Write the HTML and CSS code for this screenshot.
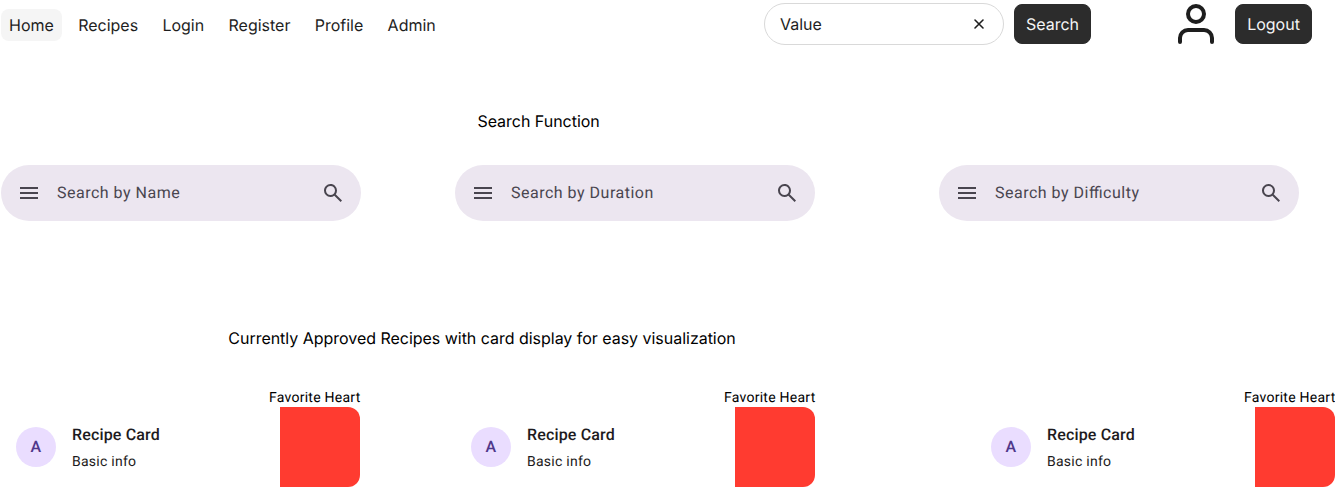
FILE: index.html
```html
<!DOCTYPE html>
<html lang="en">
<head>
<meta charset="utf-8">
<title>Recipes</title>
<link rel="stylesheet" href="styles.css">
</head>
<body>
<svg class="defs" width="0" height="0">
<symbol id="menu" viewBox="0 0 24 24"><path d="M3 18v-2h18v2zm0-5v-2h18v2zm0-5V6h18v2z"/></symbol>
<symbol id="search" viewBox="0 0 24 24"><path d="M19.6 21l-6.3-6.3A6.1 6.1 0 0 1 9.5 16a6.27 6.27 0 0 1-4.612-1.888A6.27 6.27 0 0 1 3 9.5c0-1.817.63-3.354 1.888-4.612A6.27 6.27 0 0 1 9.5 3c1.817 0 3.354.63 4.612 1.888A6.27 6.27 0 0 1 16 9.5a6.1 6.1 0 0 1-1.3 3.8l6.3 6.3zM9.5 14c1.25 0 2.313-.437 3.188-1.312S14 10.75 14 9.5s-.437-2.313-1.312-3.188S10.75 5 9.5 5s-2.313.437-3.188 1.312S5 8.25 5 9.5s.437 2.313 1.312 3.188S8.25 14 9.5 14"/></symbol>
</svg>
<header class="header">
<nav class="nav"><a class="active">Home</a><a>Recipes</a><a>Login</a><a>Register</a><a>Profile</a><a>Admin</a></nav>
<div class="field"><span>Value</span><svg width="16" height="16" viewBox="0 0 16 16"><path d="M12 4L4 12M4 4l8 8"/></svg></div>
<button class="button">Search</button>
<svg class="user" width="48" height="48" viewBox="0 0 48 48"><path d="M40 42v-4a8 8 0 0 0-8-8H16a8 8 0 0 0-8 8v4"/><circle cx="24" cy="14" r="8"/></svg>
<button class="button logout">Logout</button>
</header>
<main>
<h1 class="title">Search Function</h1>
<section class="searches">
<div class="search"><svg><use href="#menu"/></svg><span>Search by Name</span><svg><use href="#search"/></svg></div>
<div class="search"><svg><use href="#menu"/></svg><span>Search by Duration</span><svg><use href="#search"/></svg></div>
<div class="search"><svg><use href="#menu"/></svg><span>Search by Difficulty</span><svg><use href="#search"/></svg></div>
</section>
<h2 class="subtitle">Currently Approved Recipes with card display for easy visualization</h2>
<section class="cards">
<article class="recipe"><p class="favorite">Favorite Heart</p><div class="card"><div class="avatar">A</div><div class="info"><h3>Recipe Card</h3><p>Basic info</p></div><div class="media"></div></div></article>
<article class="recipe"><p class="favorite">Favorite Heart</p><div class="card"><div class="avatar">A</div><div class="info"><h3>Recipe Card</h3><p>Basic info</p></div><div class="media"></div></div></article>
<article class="recipe"><p class="favorite">Favorite Heart</p><div class="card"><div class="avatar">A</div><div class="info"><h3>Recipe Card</h3><p>Basic info</p></div><div class="media"></div></div></article>
</section>
</main>
</body>
</html>
```
FILE: styles.css
```css
* { box-sizing: border-box; margin: 0; }
body { background: #fff; color: #1e1e1e; font: 400 16px/16px Inter, sans-serif; overflow: hidden; text-rendering: geometricPrecision; }
.defs { display: block; }
.header { display: flex; width: 1335px; height: 48px; }
.nav { display: flex; gap: 8.3px; width: 763.5px; padding: 9px 0 0 1px; }
.nav a { height: 32px; padding: 8px; border-radius: 8px; }
.nav .active { background: #f5f5f5; }
.field { display: flex; align-items: center; justify-content: space-between; width: 240px; height: 42px; margin-top: 3px; padding: 0 16px 0 15.5px; border: 1px solid #d9d9d9; border-radius: 21px; }
.field svg, .user { fill: none; stroke: #1e1e1e; stroke-width: 1.6; stroke-linecap: round; stroke-linejoin: round; }
.button { width: 77px; height: 40px; margin: 4px 0 0 10.5px; padding: 0; border: 1px solid #2c2c2c; border-radius: 8px; background: #2c2c2c; color: #f5f5f5; font: inherit; text-rendering: inherit; }
.user { stroke-width: 4; margin-left: 81px; }
.logout { margin-left: 15px; }
.title { height: 20px; margin: 63px 0 0 477.4px; color: #000; font: 400 16px/20px Inter, sans-serif; letter-spacing: -.025px; }
.searches { display: grid; grid-template-columns: 454px 484px 360px; margin: 34px 0 0 1px; }
.search { display: flex; align-items: center; width: 360px; height: 56px; padding: 0 16px; border-radius: 28px; background: #ece6f0; color: #49454f; font: 400 16px/24px Roboto, sans-serif; letter-spacing: .5px; font-feature-settings: "liga" 1; }
.search svg { width: 24px; height: 24px; fill: #49454f; }
.search span { flex: 1; margin-left: 16px; }
.subtitle { height: 20px; margin: 107px 0 0 228.3px; color: #000; font: 400 16px/20px Inter, sans-serif; letter-spacing: -.025px; }
.cards { display: grid; grid-template-columns: 455px 520px 360px; margin-top: 40px; }
.recipe { width: 360px; }
.favorite { height: 19px; padding-left: 269px; color: #000; white-space: nowrap; font: 400 14px/21px Roboto, sans-serif; letter-spacing: .25px; }
.card { display: flex; align-items: center; height: 80px; padding-left: 16px; }
.avatar { width: 40px; height: 40px; border-radius: 50%; background: #eaddff; color: #4f378a; text-align: center; font: 500 16px/40px Roboto, sans-serif; letter-spacing: .15px; }
.info { flex: 1; margin-left: 16px; color: #1d1b20; font: 400 14px/20px Roboto, sans-serif; letter-spacing: .25px; }
.info h3 { margin-bottom: 4px; font: 500 16px/24px Roboto, sans-serif; letter-spacing: .15px; }
.info p { height: 20px; line-height: 22px; }
.media { width: 80px; height: 80px; border-radius: 0 12px 12px 0; background: #ff3b30; }
```
